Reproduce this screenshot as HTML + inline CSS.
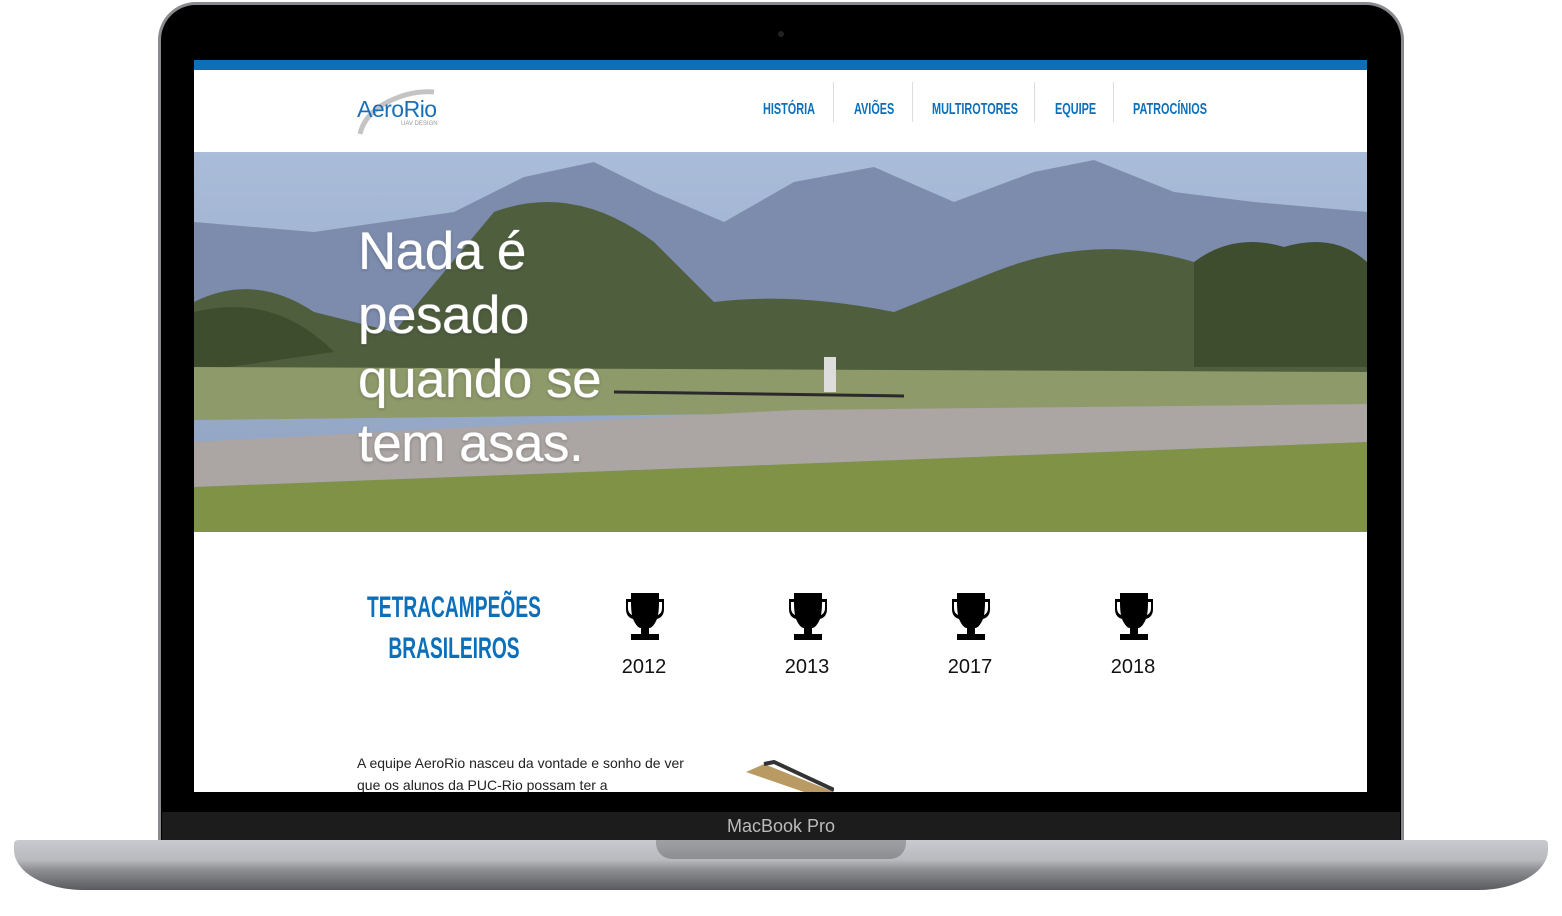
<!DOCTYPE html>
<html><head><meta charset="utf-8"><style>
*{margin:0;padding:0;box-sizing:border-box}
body{width:1562px;height:916px;background:#fff;position:relative;overflow:hidden;font-family:"Liberation Sans",sans-serif}
.abs{position:absolute}
.bez{left:158px;top:2px;width:1246px;height:845px;background:#000;border-radius:38px 38px 0 0;border:3px solid #8a8a8e;border-bottom:none}
.chin{left:162px;top:812px;width:1238px;height:30px;background:#1c1c1c}
.base{left:14px;top:840px;width:1534px;height:50px;background:linear-gradient(#c9cacf 0,#b9babe 40%,#8d8e92 60%,#5a5b5e 100%);border-radius:4px 4px 70px 70px / 4px 4px 40px 40px}
.notch{left:656px;top:840px;width:250px;height:19px;background:linear-gradient(#9fa0a4,#8d8e92);border-radius:0 0 16px 16px}
.screen{left:194px;top:60px;width:1173px;height:732px;background:#fff;overflow:hidden}
.nav a{position:absolute;top:41px;font-weight:bold;color:#0b6fba;font-size:16px;transform:scaleX(.68);transform-origin:left;text-decoration:none}
.sep{position:absolute;top:22px;width:1px;height:40px;background:#ddd}
.hero{left:0;top:92px;width:1173px;height:380px}
.h1{left:164px;top:160px;color:#fff;font-size:53px;line-height:64px;font-family:"Liberation Sans",sans-serif;letter-spacing:-0.5px;text-shadow:0 0 1px #fff,0 1px 3px rgba(0,0,0,.3)}
.tr{position:absolute;top:533px}
.yr{position:absolute;top:596px;font-size:20px;color:#111;width:60px;text-align:center}
</style></head><body>
<div class="abs bez"></div>
<div class="abs" style="left:778px;top:31px;width:6px;height:6px;border-radius:3px;background:#222"></div>
<div class="abs chin"></div>
<div class="abs" style="left:162px;top:816px;width:1238px;text-align:center;color:#bbb;font-size:18px">MacBook Pro</div>
<div class="abs base"></div>
<div class="abs notch"></div>
<div class="abs screen">
 <div class="abs" style="left:0;top:0;width:1173px;height:10px;background:#0b6fba"></div>
 <svg class="abs" style="left:160px;top:26px" width="90" height="52"><path d="M6 48 Q10 30 30 18 Q55 4 80 6" stroke="#c4c4c4" stroke-width="5" fill="none"/></svg>
 <div class="abs" style="left:163px;top:36px;color:#1a6fb8;font-size:23px;letter-spacing:-0.5px">AeroRio</div>
 <div class="abs" style="left:207px;top:61px;color:#999;font-size:6px">UAV DESIGN</div>
 <div class="nav">
  <a style="left:569px">HISTÓRIA</a><div class="sep" style="left:639px"></div>
  <a style="left:660px">AVIÕES</a><div class="sep" style="left:718px"></div>
  <a style="left:738px">MULTIROTORES</a><div class="sep" style="left:840px"></div>
  <a style="left:861px">EQUIPE</a><div class="sep" style="left:919px"></div>
  <a style="left:939px">PATROCÍNIOS</a>
 </div>
 <div class="abs hero">
  <svg width="1173" height="380" style="position:absolute;left:0;top:0">
   <defs><linearGradient id="s" x1="0" y1="0" x2="0" y2="1"><stop offset="0" stop-color="#a9bcd8"/><stop offset="1" stop-color="#8ea0c0"/></linearGradient></defs>
   <rect width="1173" height="380" fill="url(#s)"/>
   <path d="M0 70 L120 80 L260 60 L330 25 L400 10 L460 40 L530 70 L600 30 L680 15 L760 50 L840 20 L900 8 L980 40 L1060 50 L1173 60 L1173 200 L0 200Z" fill="#7d8cad"/>
   <path d="M0 150 Q60 120 120 160 L200 180 L300 60 Q380 30 460 90 L520 150 Q600 140 700 160 L800 120 Q900 80 1000 110 Q1080 90 1173 130 L1173 225 L0 225Z" fill="#4f5f3e"/>
   <path d="M0 160 Q80 140 140 200 L0 220Z M1000 110 Q1040 80 1090 95 Q1140 80 1173 110 L1173 215 L1000 215Z" fill="#3d4d2e"/>
   <path d="M0 215 L1173 220 L1173 255 L0 268Z" fill="#8e9a6a"/>
   <path d="M0 290 L600 258 L1173 252 L1173 290 L0 335Z" fill="#aba5a3"/>
   <path d="M0 335 L1173 290 L1173 380 L0 380Z" fill="#7f9246"/>
   <path d="M420 240 L710 244" stroke="#2a2a2a" stroke-width="3"/>
   <rect x="630" y="205" width="12" height="35" fill="#ddd"/>
  </svg>
 </div>
 <div class="abs h1">Nada é<br>pesado<br>quando se<br>tem asas.</div>
 <div class="abs" style="left:110px;top:527px;width:300px;text-align:center;color:#0b6fba;font-weight:bold;font-size:30px;line-height:41px;transform:scaleX(.64);transform-origin:center">TETRACAMPEÕES<br>BRASILEIROS</div>
 <svg class="tr" style="left:431px" width="40" height="48"><path d="M6 0h28v6h5v10q0 8-7 10q-4 9-8 9v6h10v6H6v-6h10v-6q-4 0-8-9q-7-2-7-10V6h5z M3 9v6q0 5 4 7q-1-5-1-13z M37 9v6q0 5-4 7q1-5 1-13z" fill="#000" fill-rule="evenodd"/></svg>
 <svg class="tr" style="left:594px" width="40" height="48"><path d="M6 0h28v6h5v10q0 8-7 10q-4 9-8 9v6h10v6H6v-6h10v-6q-4 0-8-9q-7-2-7-10V6h5z M3 9v6q0 5 4 7q-1-5-1-13z M37 9v6q0 5-4 7q1-5 1-13z" fill="#000" fill-rule="evenodd"/></svg>
 <svg class="tr" style="left:757px" width="40" height="48"><path d="M6 0h28v6h5v10q0 8-7 10q-4 9-8 9v6h10v6H6v-6h10v-6q-4 0-8-9q-7-2-7-10V6h5z M3 9v6q0 5 4 7q-1-5-1-13z M37 9v6q0 5-4 7q1-5 1-13z" fill="#000" fill-rule="evenodd"/></svg>
 <svg class="tr" style="left:920px" width="40" height="48"><path d="M6 0h28v6h5v10q0 8-7 10q-4 9-8 9v6h10v6H6v-6h10v-6q-4 0-8-9q-7-2-7-10V6h5z M3 9v6q0 5 4 7q-1-5-1-13z M37 9v6q0 5-4 7q1-5 1-13z" fill="#000" fill-rule="evenodd"/></svg>
 <div class="yr" style="left:420px">2012</div>
 <div class="yr" style="left:583px">2013</div>
 <div class="yr" style="left:746px">2017</div>
 <div class="yr" style="left:909px">2018</div>
 <div class="abs" style="left:163px;top:692px;font-size:14px;line-height:22px;color:#222;width:345px">A equipe AeroRio nasceu da vontade e sonho de ver que os alunos da PUC-Rio possam ter a</div>
 <svg class="abs" style="left:550px;top:700px" width="90" height="32"><path d="M2 12 L20 4 L90 32 L60 32Z" fill="#b89a62"/><path d="M20 4 L30 2 L90 30" stroke="#333" stroke-width="4" fill="none"/></svg>
</div>
</body></html>
